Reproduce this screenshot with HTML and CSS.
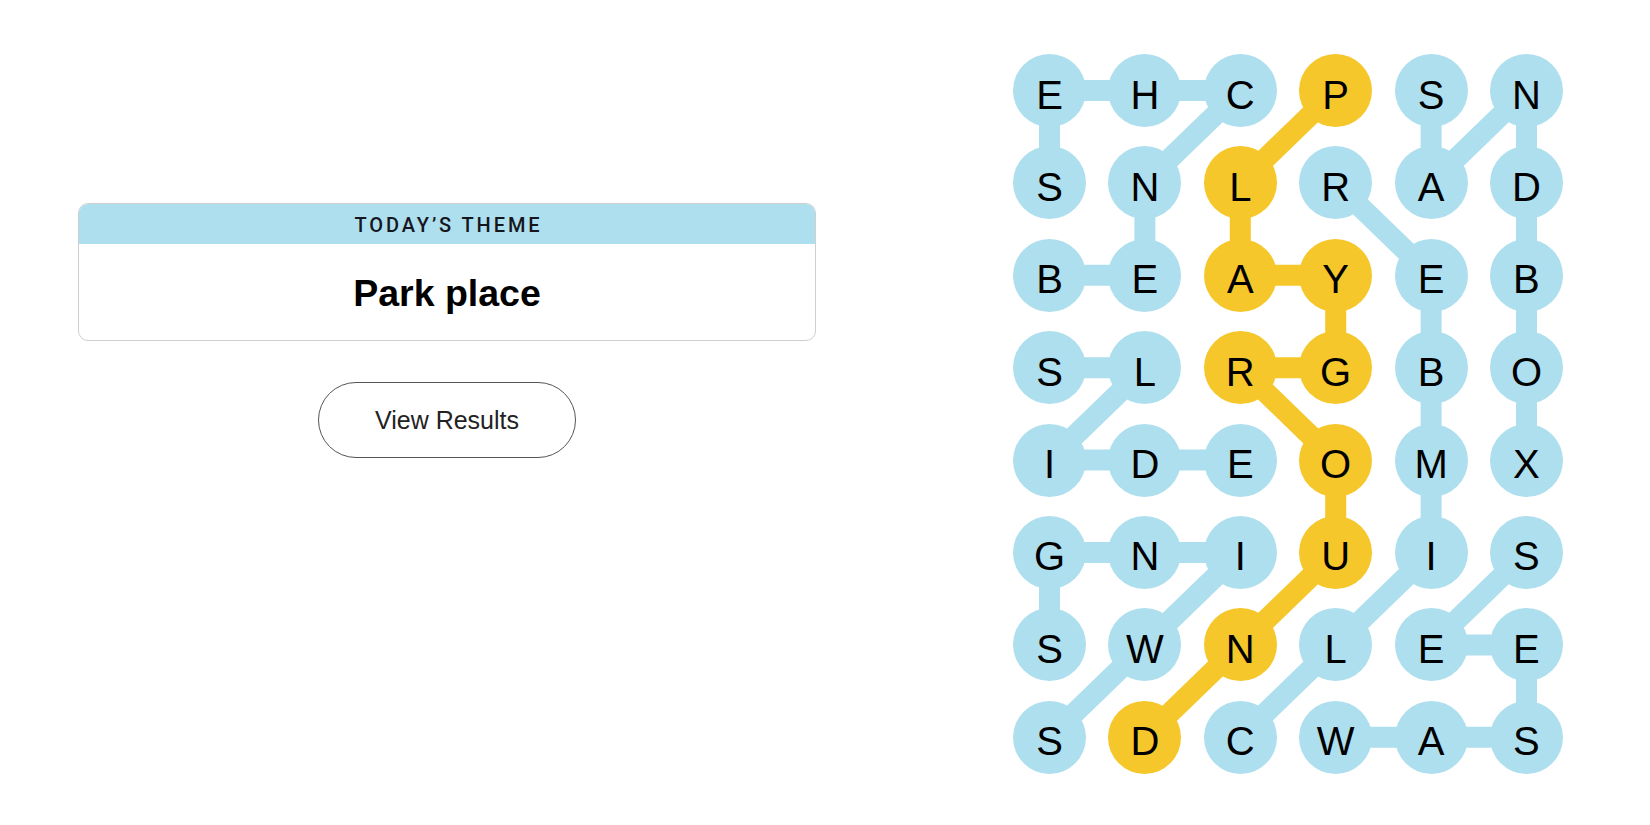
FILE: index.html
```html
<!DOCTYPE html>
<html lang="en">
<head>
<meta charset="utf-8">
<title>Strands</title>
<link rel="stylesheet" href="styles.css">
</head>
<body>
<main class="game">
  <section class="info">
    <div class="theme-card">
      <div class="theme-header">TODAY’S THEME</div>
      <div class="theme-body">Park place</div>
    </div>
    <button class="results-btn" type="button">View Results</button>
  </section>
  <section class="board">
    <svg class="links" viewBox="0 0 550 720" width="550" height="720" aria-hidden="true">
      <g class="found">
        <polyline points="36.5,221.3 131.9,221.3 131.9,128.9 227.3,36.5 131.9,36.5 36.5,36.5 36.5,128.9"/>
        <polyline points="36.5,313.7 131.9,313.7 36.5,406.1 131.9,406.1 227.3,406.1"/>
        <polyline points="36.5,683.3 131.9,590.9 227.3,498.5 131.9,498.5 36.5,498.5 36.5,590.9"/>
        <polyline points="418.1,36.5 418.1,128.9 513.5,36.5 513.5,128.9 513.5,221.3 513.5,313.7 513.5,406.1"/>
        <polyline points="513.5,498.5 418.1,590.9 513.5,590.9 513.5,683.3 418.1,683.3 322.7,683.3"/>
        <polyline points="227.3,683.3 322.7,590.9 418.1,498.5 418.1,406.1 418.1,313.7 418.1,221.3 322.7,128.9"/>
      </g>
      <g class="spangram">
        <polyline points="322.7,36.5 227.3,128.9 227.3,221.3 322.7,221.3 322.7,313.7 227.3,313.7 322.7,406.1 322.7,498.5 227.3,590.9 131.9,683.3"/>
      </g>
    </svg>
    <div class="grid">
      <div class="cell">E</div><div class="cell">H</div><div class="cell">C</div><div class="cell span">P</div><div class="cell">S</div><div class="cell">N</div>
      <div class="cell">S</div><div class="cell">N</div><div class="cell span">L</div><div class="cell">R</div><div class="cell">A</div><div class="cell">D</div>
      <div class="cell">B</div><div class="cell">E</div><div class="cell span">A</div><div class="cell span">Y</div><div class="cell">E</div><div class="cell">B</div>
      <div class="cell">S</div><div class="cell">L</div><div class="cell span">R</div><div class="cell span">G</div><div class="cell">B</div><div class="cell">O</div>
      <div class="cell">I</div><div class="cell">D</div><div class="cell">E</div><div class="cell span">O</div><div class="cell">M</div><div class="cell">X</div>
      <div class="cell">G</div><div class="cell">N</div><div class="cell">I</div><div class="cell span">U</div><div class="cell">I</div><div class="cell">S</div>
      <div class="cell">S</div><div class="cell">W</div><div class="cell span">N</div><div class="cell">L</div><div class="cell">E</div><div class="cell">E</div>
      <div class="cell">S</div><div class="cell span">D</div><div class="cell">C</div><div class="cell">W</div><div class="cell">A</div><div class="cell">S</div>
    </div>
  </section>
</main>
</body>
</html>
```

FILE: styles.css
```css
html, body {
  margin: 0;
  padding: 0;
  background: #ffffff;
}

body {
  font-family: "Liberation Sans", Arial, sans-serif;
  color: #121212;
}

.game {
  display: flex;
  align-items: flex-start;
}

.info {
  width: 738px;
  margin-left: 78px;
  padding-top: 203px;
  display: flex;
  flex-direction: column;
  align-items: center;
}

.theme-card {
  width: 100%;
  box-sizing: border-box;
  border: 1px solid #cfcfcf;
  border-radius: 10px;
  overflow: hidden;
}

.theme-header {
  height: 40px;
  background: #aedfee;
  display: flex;
  align-items: center;
  justify-content: center;
  font-family: Roboto, "Liberation Sans", Arial, sans-serif;
  font-weight: 500;
  font-size: 20px;
  letter-spacing: 2.9px;
  color: #16161e;
  padding-left: 3px;
  padding-top: 1px;
  box-sizing: border-box;
}

.theme-body {
  height: 96px;
  display: flex;
  align-items: center;
  justify-content: center;
  font-size: 37.5px;
  font-weight: 700;
  color: #000;
  padding-top: 2px;
  box-sizing: border-box;
}

.results-btn {
  margin-top: 41px;
  width: 258px;
  height: 76px;
  border: 1px solid #555;
  border-radius: 38px;
  background: #fff;
  font-family: "Liberation Sans", Arial, sans-serif;
  font-size: 25px;
  color: #222;
  padding: 0;
}

.board {
  position: relative;
  margin-left: 197px;
  margin-top: 54px;
  width: 550px;
  height: 720px;
}

.links {
  position: absolute;
  left: 0;
  top: 0;
}

.links polyline {
  fill: none;
  stroke-width: 21;
  stroke-linejoin: round;
  stroke-linecap: round;
}

.found polyline {
  stroke: #aedfee;
}

.spangram polyline {
  stroke: #f5c72a;
}

.grid {
  position: relative;
  display: grid;
  grid-template-columns: repeat(6, 73px);
  grid-auto-rows: 73px;
  column-gap: 22.4px;
  row-gap: 19.4px;
}

.cell {
  width: 73px;
  height: 73px;
  box-sizing: border-box;
  border-radius: 50%;
  background: #aedfee;
  display: flex;
  align-items: center;
  justify-content: center;
  padding-top: 8px;
  font-size: 40px;
  color: #000;
  line-height: 1;
}

.cell.span {
  background: #f5c72a;
}
```
